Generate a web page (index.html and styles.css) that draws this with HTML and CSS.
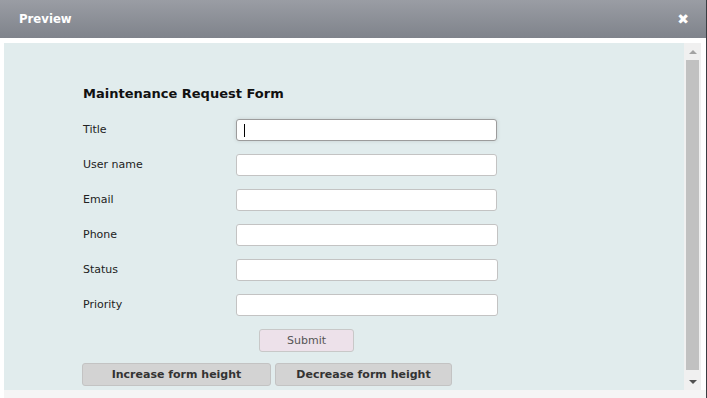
FILE: index.html
```html
<!DOCTYPE html>
<html lang="en">
<head>
  <meta charset="UTF-8">
  <title>Preview</title>
  <link rel="stylesheet" href="styles.css">
</head>
<body>

  <div class="dialog-header">
    <span class="dialog-title">Preview</span>
    <span class="dialog-close">&#10006;</span>
  </div>

  <div class="dialog-body">
    <div class="frame">
      <div class="frame-content">
        <div class="form">
          <div class="form-title">Maintenance Request Form</div>

          <div class="form-rows">
            <label class="form-label">Title</label>
            <input class="form-input focused" type="text">

            <label class="form-label">User name</label>
            <input class="form-input" type="text">

            <label class="form-label">Email</label>
            <input class="form-input" type="text">

            <label class="form-label">Phone</label>
            <input class="form-input wide" type="text">

            <label class="form-label">Status</label>
            <input class="form-input wide" type="text">

            <label class="form-label">Priority</label>
            <input class="form-input wide" type="text">
          </div>

          <div class="submit-row">
            <button class="submit-button">Submit</button>
          </div>

          <div class="height-buttons">
            <button class="height-button increase">Increase form height</button>
            <button class="height-button decrease">Decrease form height</button>
          </div>
        </div>
      </div>

      <div class="scrollbar">
        <div class="scroll-arrow up"></div>
        <div class="scroll-track">
          <div class="scroll-thumb"></div>
        </div>
        <div class="scroll-arrow down"></div>
      </div>
    </div>
  </div>

  <div class="dialog-footer"></div>

</body>
</html>
```

FILE: styles.css
```css
body {
  margin: 0;
  padding: 0;
  height: 398px;
  overflow: hidden;
  background: #ffffff;
  font-family: "DejaVu Sans", Verdana, sans-serif;
  border-right: 1px solid #3a3d42;
  box-sizing: border-box;
}

.dialog-header {
  height: 38px;
  display: flex;
  align-items: center;
  justify-content: space-between;
  padding: 0 17px 0 19px;
  background: linear-gradient(to bottom, #9a9da4, #7f838b);
  color: #ffffff;
}

.dialog-title {
  font-family: "DejaVu Sans Condensed", "DejaVu Sans", sans-serif;
  font-weight: bold;
  font-size: 13px;
  margin-top: -1px;
}

.dialog-close {
  font-size: 14px;
  font-weight: bold;
  margin-top: -1px;
}

.dialog-body {
  padding: 5px 5px 0 4px;
  background: #ffffff;
}

.frame {
  display: flex;
  height: 347px;
}

.frame-content {
  flex: 1;
  background: #e1eced;
  overflow: hidden;
}

.form {
  padding: 43px 0 0 79px;
  font-size: 11px;
  color: #222222;
}

.form-title {
  font-size: 13px;
  font-weight: bold;
  color: #111111;
  height: 16px;
  margin-bottom: 17px;
}

.form-rows {
  display: grid;
  grid-template-columns: 153px 262px;
  row-gap: 13px;
  align-items: center;
}

.form-label {
  margin-top: -2px;
}

.form-input {
  width: 261px;
  height: 22px;
  box-sizing: border-box;
  margin: 0;
  border: 1px solid #c3c3c3;
  border-radius: 3px;
  background: #ffffff;
  padding: 0 6px;
  font-family: inherit;
}

.form-input.wide {
  width: 262px;
}

.form-input.focused {
  border-color: #9c9c9c;
  box-shadow: 0 0 4px rgba(0, 0, 0, 0.12);
  background-image: linear-gradient(#000, #000);
  background-size: 1px 13px;
  background-repeat: no-repeat;
  background-position: 7px 4px;
}

.submit-row {
  padding: 13px 0 0 176px;
}

.submit-button {
  width: 95px;
  height: 23px;
  margin: 0;
  border: 1px solid #c8c8c8;
  border-radius: 3px;
  background: #ede1ea;
  color: #555555;
  font-family: inherit;
  font-size: 11px;
}

.height-buttons {
  display: flex;
  gap: 4px;
  padding: 11px 0 0 0;
  margin-left: -1px;
}

.height-button {
  height: 23px;
  margin: 0;
  border: 1px solid #c3c3c3;
  border-radius: 3px;
  background: #d3d3d3;
  color: #333333;
  font-family: inherit;
  font-weight: bold;
  font-size: 11px;
}

.height-button.increase {
  width: 189px;
}

.height-button.decrease {
  width: 177px;
}

.scrollbar {
  width: 17px;
  background: #f0f0f0;
  display: flex;
  flex-direction: column;
}

.scroll-arrow {
  height: 17px;
  display: flex;
  align-items: center;
  justify-content: center;
}

.scroll-arrow.up::before {
  content: "";
  border-left: 4px solid transparent;
  border-right: 4px solid transparent;
  border-bottom: 4px solid #a3a3a3;
}

.scroll-arrow.down::before {
  content: "";
  border-left: 4px solid transparent;
  border-right: 4px solid transparent;
  border-top: 4px solid #505050;
}

.scroll-track {
  flex: 1;
  padding: 0 2px;
}

.scroll-thumb {
  height: 310px;
  background: #c1c1c1;
}

.dialog-footer {
  height: 8px;
  margin-left: 4px;
  background: #f5f5f5;
}
```
